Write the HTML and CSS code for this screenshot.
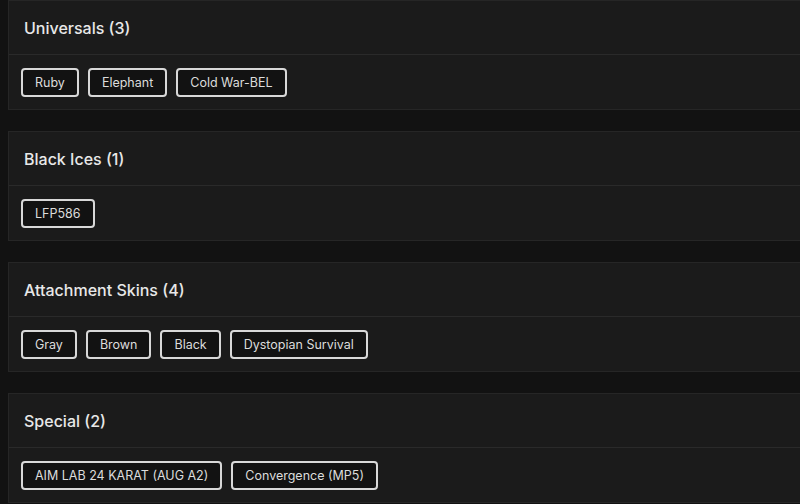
FILE: index.html
```html
<!DOCTYPE html>
<html>
<head>
<meta charset="utf-8">
<link rel="stylesheet" href="styles.css">
</head>
<body>
<div class="list">
  <section class="card">
    <div class="card-head"><h2>Universals (3)</h2></div>
    <div class="card-body">
      <span class="chip">Ruby</span>
      <span class="chip">Elephant</span>
      <span class="chip">Cold War-BEL</span>
    </div>
  </section>
  <section class="card">
    <div class="card-head"><h2>Black Ices (1)</h2></div>
    <div class="card-body">
      <span class="chip">LFP586</span>
    </div>
  </section>
  <section class="card">
    <div class="card-head"><h2>Attachment Skins (4)</h2></div>
    <div class="card-body">
      <span class="chip">Gray</span>
      <span class="chip">Brown</span>
      <span class="chip">Black</span>
      <span class="chip">Dystopian Survival</span>
    </div>
  </section>
  <section class="card">
    <div class="card-head"><h2>Special (2)</h2></div>
    <div class="card-body">
      <span class="chip">AIM LAB 24 KARAT (AUG A2)</span>
      <span class="chip">Convergence (MP5)</span>
    </div>
  </section>
</div>
</body>
</html>
```

FILE: styles.css
```css
html, body {
  margin: 0;
  padding: 0;
  background: #121212;
  overflow: hidden;
}
body {
  padding-left: 8px;
  font-family: "Inter", "Noto Sans", sans-serif;
  color: #e6e6e6;
}
.list {
  display: flex;
  flex-direction: column;
  gap: 21px;
}
.card {
  background: #1b1b1b;
  border: 1px solid #262626;
  border-right: none;
}
.card-head {
  height: 53px;
  display: flex;
  align-items: center;
  padding-left: 15px;
  border-bottom: 1px solid #2a2a2a;
}
.card-head h2 {
  margin: 0;
  font-size: 16px;
  font-weight: 500;
  color: #e8e8e8;
}
.card-body {
  display: flex;
  gap: 9px;
  padding: 13px 12px 12px;
}
.chip {
  display: inline-flex;
  align-items: center;
  height: 25px;
  padding: 0 12px;
  border: 2px solid #d8d8d8;
  border-radius: 4px;
  background: #121212;
  font-size: 12.5px;
  color: #dcdcdc;
}
```
